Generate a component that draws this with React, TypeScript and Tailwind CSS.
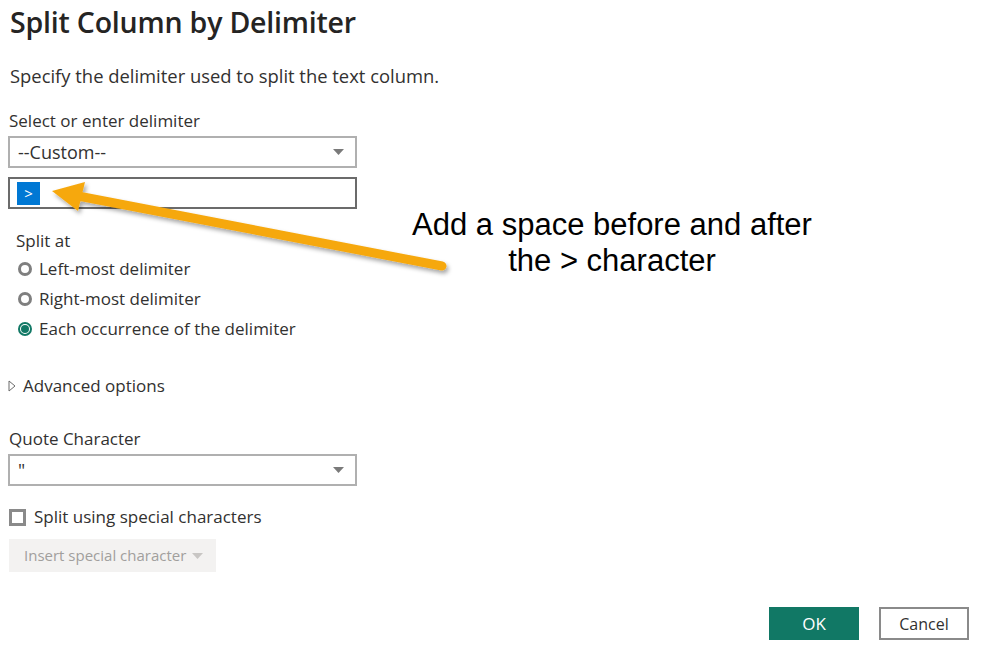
import type { ReactNode } from 'react'

const font = { fontFamily: '"Open Sans", "Noto Sans", Arial, sans-serif' }

function Caret({ color = '#7a7a7a' }: { color?: string }) {
  return (
    <svg width="11" height="6" viewBox="0 0 11 6" className="flex-shrink-0">
      <path d="M0 0 H11 L5.5 6 Z" fill={color} />
    </svg>
  )
}

function Select({ value }: { value: string }) {
  return (
    <div className="w-[349px] h-[32px] border-2 border-[#b0b0b0] flex items-center pl-[8px] pr-[11px] bg-white">
      <span className="flex-1 text-[18px] text-[#323130]">{value}</span>
      <Caret />
    </div>
  )
}

function Radio({ checked, children }: { checked?: boolean; children: ReactNode }) {
  return (
    <div className="h-[30px] flex items-center gap-[7px] pl-[10px]">
      {checked ? (
        <span className="w-[14px] h-[14px] rounded-full border-2 border-[#117865] flex items-center justify-center">
          <span className="w-[8px] h-[8px] rounded-full bg-[#117865]" />
        </span>
      ) : (
        <span className="w-[14px] h-[14px] rounded-full border-[3px] border-[#7f7f7f]" />
      )}
      <span className="text-[17px] text-[#323130]">{children}</span>
    </div>
  )
}

function Arrow() {
  return (
    <svg className="absolute left-0 top-0 pointer-events-none" width="981" height="651">
      <defs>
        <filter id="shadow" x="-10%" y="-50%" width="120%" height="200%">
          <feDropShadow dx="2" dy="3" stdDeviation="2" floodColor="#000" floodOpacity="0.35" />
        </filter>
      </defs>
      <g filter="url(#shadow)">
        <line x1="442" y1="266" x2="78" y2="196" stroke="#f6a80f" strokeWidth="9" strokeLinecap="round" />
        <polygon points="52,191 85,182 78,211" fill="#f6a80f" />
      </g>
    </svg>
  )
}

export default function App() {
  return (
    <div className="relative w-[981px] h-[651px] bg-white overflow-hidden" style={font}>
      <div className="flex flex-col pl-[8px]">
        {/* Header */}
        <h1 className="mt-[3px] pl-[2px] text-[28.5px] leading-[38px] font-semibold text-[#252423] tracking-[-0.2px]">
          Split Column by Delimiter
        </h1>
        <p className="mt-[24px] pl-[2px] text-[18.4px] leading-[22px] text-[#323130]">
          Specify the delimiter used to split the text column.
        </p>

        {/* Delimiter */}
        <label className="mt-[23px] pl-[1px] text-[17px] leading-[22px] text-[#323130]">Select or enter delimiter</label>
        <div className="mt-[4px]">
          <Select value="--Custom--" />
        </div>
        <div className="mt-[9px] w-[349px] h-[32px] border-2 border-[#6b6b6b] flex items-center pl-[7px]">
          <span className="w-[23px] h-[23px] bg-[#0078d4] text-white text-[15px] flex items-center justify-center">
            &gt;
          </span>
        </div>

        {/* Split at */}
        <div className="mt-[21px] pl-[8px] text-[17px] leading-[22px] text-[#323130]">Split at</div>
        <div className="mt-[2px] flex flex-col">
          <Radio>Left-most delimiter</Radio>
          <Radio>Right-most delimiter</Radio>
          <Radio checked>Each occurrence of the delimiter</Radio>
        </div>

        {/* Advanced */}
        <div className="mt-[27px] h-[30px] flex items-center gap-[7px]">
          <svg width="8" height="12" viewBox="0 0 8 12">
            <path d="M1 1 L7 6 L1 11 Z" fill="none" stroke="#6b6b6b" strokeWidth="1" />
          </svg>
          <span className="text-[17px] text-[#323130]">Advanced options</span>
        </div>

        <label className="mt-[27px] pl-[1px] text-[17px] leading-[22px] text-[#323130]">Quote Character</label>
        <div className="mt-[4px]">
          <Select value={'"'} />
        </div>

        <div className="mt-[20px] h-[22px] flex items-center gap-[8px] pl-[1px]">
          <span className="w-[17px] h-[17px] border-[3px] border-[#8a8a8a] bg-white" />
          <span className="text-[17px] text-[#323130]">Split using special characters</span>
        </div>

        <div className="mt-[11px] w-[207px] h-[33px] bg-[#f3f2f1] flex items-center pl-[15px] pr-[13px] gap-[6px] ml-[1px]">
          <span className="flex-1 whitespace-nowrap text-[15px] text-[#a19f9d]">Insert special character</span>
          <Caret color="#c8c6c4" />
        </div>
      </div>

      {/* Footer buttons */}
      <div className="absolute left-[769px] top-[607px] flex gap-[20px]">
        <button className="w-[90px] h-[33px] bg-[#117865] text-white text-[17px]">OK</button>
        <button className="w-[90px] h-[33px] border-2 border-[#8a8a8a] bg-white text-[#323130] text-[16px]">Cancel</button>
      </div>

      {/* Annotation overlay */}
      <Arrow />
      <div
        className="absolute left-[392px] top-[207px] w-[440px] text-center text-[31px] leading-[36px] text-black"
        style={{ fontFamily: '"Liberation Sans", Arial, sans-serif' }}
      >
        Add a space before and after
        <br />
        the &gt; character
      </div>
    </div>
  )
}
